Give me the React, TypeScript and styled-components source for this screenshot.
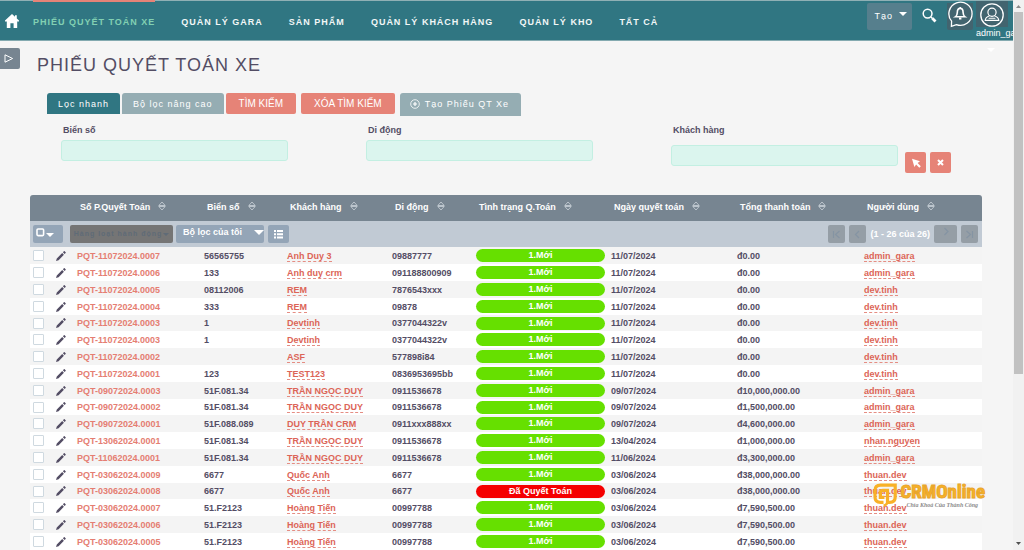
import React from 'react';
import styled, { createGlobalStyle, css } from 'styled-components';

const color = {
  teal: '#307682',
  page: '#f5f5f5',
  slate: '#778591',
  mist: '#c1cad4',
  steel: '#94a5b7',
  tab: '#95adb3',
  coral: '#e68377',
  ink: '#534d64',
  green: '#66e000',
  red: '#f50000',
};

const GlobalStyle = createGlobalStyle`
  * { box-sizing: border-box; }
  body {
    margin: 0;
    background: ${color.page};
    color: ${color.ink};
    font: 9px/12px "Liberation Sans", Arial, sans-serif;
  }
  button, input { font: inherit; margin: 0; }
  button { border: 0; padding: 0; color: #fff; cursor: pointer; }
  a { color: inherit; text-decoration: none; }
`;

const Shell = styled.div`
  display: flex;
  height: 100vh;
  overflow: hidden;
`;

const Page = styled.div`
  position: relative;
  flex: 1;
  min-width: 0;
  overflow: hidden;
`;

const ScrollTrack = styled.div`
  display: flex;
  flex-direction: column;
  justify-content: space-between;
  align-items: center;
  width: 11px;
  padding: 5px 0;
  background: #f1f1f1;
`;

const ScrollThumb = styled.div`
  flex: none;
  width: 9px;
  height: 67%;
  margin-top: 4px;
  margin-bottom: auto;
  background: #c1c1c1;
`;

const NavBar = styled.nav`
  display: flex;
  height: 41px;
  padding-left: 5px;
  background: ${color.teal};
  border-top: 1px solid #8fb0b5;
  border-bottom: 1px solid #84aab0;
`;

const HomeLink = styled.a`
  display: flex;
  align-items: center;
  width: 28px;
`;

const NavList = styled.div`
  display: flex;
  gap: 26px;
  flex: 1;
`;

const NavItem = styled.a<{ $active?: boolean }>`
  position: relative;
  padding-top: 15px;
  font-weight: bold;
  letter-spacing: 1px;
  white-space: nowrap;
  color: ${(p) => (p.$active ? '#82d0b2' : '#f2f7f7')};
  ${(p) =>
    p.$active &&
    css`
      &::before {
        content: '';
        position: absolute;
        inset: -1px 0 auto;
        height: 2px;
        background: ${color.coral};
      }
    `}
`;

const NavTools = styled.div`
  display: flex;
  align-items: flex-start;
`;

const CreateButton = styled.button`
  display: flex;
  align-items: center;
  gap: 6px;
  height: 27px;
  margin-top: 2px;
  padding: 0 5px 2px 7px;
  border-radius: 2px;
  background: #567f8d;
  letter-spacing: 1px;
  svg { margin-bottom: 3px; }
`;

const SearchButton = styled.button`
  margin: 7px 10px 0;
  width: 15px;
  height: 15px;
  background: none;
`;

const BellButton = styled.button`
  width: 26px;
  height: 29px;
  border-radius: 2px;
  background: linear-gradient(transparent 2px, #42646f 2px);
`;

const UserButton = styled.button`
  display: flex;
  flex-direction: column;
  align-items: flex-start;
  width: 37px;
  margin-left: 3px;
  overflow: hidden;
  background: none;
`;

const Avatar = styled.span`
  display: flex;
  justify-content: center;
  align-items: flex-end;
  width: 32px;
  height: 26px;
  background: #42646f;
`;

const UserCaret = styled.span`
  position: absolute;
  top: 48px;
  right: 18px;
  line-height: 0;
  color: #fff;
`;

const TitleRow = styled.header`
  display: flex;
  gap: 17px;
  padding-top: 7px;
`;

const SideToggle = styled.button`
  display: flex;
  align-items: center;
  padding-left: 4px;
  width: 20px;
  height: 21px;
  border-radius: 0 2px 2px 0;
  background: ${color.slate};
`;

const Title = styled.h1`
  margin: 5px 0 0;
  font-size: 18px;
  line-height: 24px;
  font-weight: normal;
  letter-spacing: 1px;
`;

const ActionRow = styled.div`
  display: flex;
  align-items: flex-start;
  padding: 16px 0 0 47px;
`;

const TabButton = styled.button<{ $active?: boolean }>`
  height: 21px;
  margin-right: 2px;
  padding: 0 11px;
  border-radius: 3px 3px 0 0;
  background: ${(p) => (p.$active ? color.teal : color.tab)};
  letter-spacing: 1px;
`;

const CoralButton = styled.button`
  height: 21px;
  margin-right: 5px;
  padding: 0 13px;
  border-radius: 2px;
  background: ${color.coral};
  font-size: 10px;
`;

const NewButton = styled.button`
  display: flex;
  align-items: center;
  gap: 5px;
  height: 23px;
  padding: 0 12px 2px 10px;
  border-radius: 3px 3px 0 0;
  background: ${color.tab};
  letter-spacing: 1px;
`;

const Filters = styled.form`
  display: grid;
  grid-template-columns: repeat(3, 1fr);
  align-items: start;
  height: 79px;
  padding: 8px 37px 0 61px;
`;

const Field = styled.div`
  display: grid;
  gap: 4px;
`;

const FieldLabel = styled.label`
  padding-left: 2px;
  font-weight: bold;
`;

const FieldRow = styled.div<{ $lowered?: boolean }>`
  display: flex;
  gap: 4px;
  padding-top: ${(p) => (p.$lowered ? '5px' : '0')};
`;

const TextBox = styled.input`
  width: 227px;
  height: 21px;
  border: 1px solid #c3efe2;
  border-radius: 3px;
  background: #dbf5ee;
`;

const PickerButtons = styled.div`
  display: flex;
  gap: 4px;
  padding: 7px 0 0 3px;
`;

const SquareButton = styled.button`
  display: flex;
  align-items: center;
  justify-content: center;
  width: 21px;
  height: 21px;
  border-radius: 2px;
  background: ${color.coral};
`;

const TableWrap = styled.div`
  margin: 0 31px 0 30px;
  border-radius: 3px 3px 0 0;
  overflow: hidden;
`;

const Table = styled.table`
  width: 100%;
  table-layout: fixed;
  border-collapse: collapse;
  font-weight: bold;
`;

const HeadRow = styled.tr`
  height: 26px;
  background: ${color.slate};
  color: #fff;
`;

const HeadCell = styled.th`
  padding: 0 0 2px 6px;
  text-align: left;
  white-space: nowrap;
  svg { margin-left: 8px; vertical-align: -1px; }
`;

const ToolRow = styled.tr`
  height: 26px;
  background: ${color.mist};
  color: #fff;
  td { padding: 0 4px 0 3px; }
`;

const ToolBar = styled.div`
  display: flex;
  align-items: center;
`;

const ToolButton = styled.button<{ $width: number; $gap: number }>`
  display: flex;
  align-items: center;
  justify-content: center;
  gap: 1px;
  width: ${(p) => p.$width}px;
  height: 18px;
  margin-right: ${(p) => p.$gap}px;
  border-radius: 2px;
  background: ${color.steel};
  font-weight: bold;
  white-space: nowrap;
`;

const SelectButton = styled(ToolButton)`
  justify-content: flex-start;
  padding: 0 0 3px 3px;
  svg + svg { margin-top: 5px; }
`;

const FilterButton = styled(ToolButton)`
  justify-content: space-between;
  padding: 0 0 4px 7px;
`;

const BulkButton = styled(ToolButton)`
  background: #757575;
  color: #5f6b77;
  font-size: 7px;
  letter-spacing: 1px;
`;

const Pager = styled.div`
  display: flex;
  align-items: center;
  gap: 4px;
  margin-left: auto;
`;

const PageButton = styled.button<{ $wide?: boolean }>`
  display: flex;
  align-items: center;
  justify-content: center;
  width: ${(p) => (p.$wide ? 23 : 17)}px;
  height: 18px;
  padding-bottom: ${(p) => (p.$wide ? 6 : 0)}px;
  border-radius: 2px;
  background: #959ea6;
`;

const DataRow = styled.tr`
  height: 17px;
  background: #fff;
  &:nth-child(odd) { background: #f4f4f4; }
  &:nth-child(5n) { height: 16px; }
`;

const Cell = styled.td`
  padding: 0 3px;
  line-height: 14px;
  white-space: nowrap;
`;

const CheckCell = styled(Cell)`
  line-height: 0;
`;

const CheckBox = styled.input`
  display: block;
  appearance: none;
  width: 11px;
  height: 11px;
  border: 1px solid #cfd9e0;
  border-radius: 1px;
  background: #fff;
`;

const EditCell = styled(Cell)`
  padding-left: 9px;
  line-height: 0;
`;

const NumberLink = styled.a`
  color: #e57e72;
`;

const DashedLink = styled.a`
  display: inline-block;
  line-height: 10px;
  border-bottom: 1px dashed #e58d83;
  color: #dc6457;
`;

const Pill = styled.span<{ $done: boolean }>`
  display: block;
  height: 13px;
  border-radius: 7px;
  background: ${(p) => (p.$done ? color.red : color.green)};
  color: #fff;
  line-height: 13px;
  text-align: center;
`;

const Watermark = styled.div`
  position: absolute;
  right: 28px;
  bottom: 41px;
  display: flex;
  gap: 3px;
  align-items: flex-start;
`;

const BrandName = styled.div`
  color: #f8b128;
  font: bold 19px/18px "Liberation Sans Narrow", "Roboto Condensed", "Open Sans Condensed", "DejaVu Sans Condensed", sans-serif;
  -webkit-text-stroke: 1px #e9a62b;
`;

const Tagline = styled.div`
  padding-left: 6px;
  color: #8b8b8b;
  font: italic bold 6px/8px "Liberation Serif", serif;
`;

const Caret = ({ size = 8 }: { size?: number }) => (
  <svg width={size} height={size / 2} viewBox="0 0 8 4" aria-hidden="true">
    <path d="M0 0h8L4 4z" fill="currentColor" />
  </svg>
);

const SortIcon = () => (
  <svg width="8" height="10" viewBox="0 0 8 10" fill="none" stroke="#cdd4da" aria-hidden="true">
    <path d="M.8 4.5 4 1l3.2 3.5zM.8 5.5 4 9l3.2-3.5z" strokeWidth="0.8" />
  </svg>
);

const Pencil = () => (
  <svg width="10" height="10" viewBox="0 0 10 10" fill={color.ink} aria-hidden="true">
    <path d="M0 10l.8-2.6L6.2 2l1.7 1.7L2.6 9.2zM6.9 1.3L7.9.3q.4-.4.8 0l.9.9q.4.5 0 .9L8.6 3z" />
  </svg>
);

const Chevron = ({ d }: { d: string }) => (
  <svg width="9" height="9" viewBox="0 0 9 9" fill="none" stroke="#8594a3" strokeWidth="1.2" aria-hidden="true">
    <path d={d} />
  </svg>
);

const navItems = ['PHIẾU QUYẾT TOÁN XE', 'QUẢN LÝ GARA', 'SẢN PHẨM', 'QUẢN LÝ KHÁCH HÀNG', 'QUẢN LÝ KHO', 'TẤT CẢ'];

const columns = [
  ['Số P.Quyết Toán', 127],
  ['Biển số', 83],
  ['Khách hàng', 105],
  ['Di động', 84],
  ['Tình trạng Q.Toán', 135],
  ['Ngày quyết toán', 126],
  ['Tổng thanh toán', 127],
  ['Người dùng', 121],
] as const;

const rows = [
  ['PQT-11072024.0007', '56565755', 'Anh Duy 3', '09887777', '1.Mới', '11/07/2024', 'đ0.00', 'admin_gara'],
  ['PQT-11072024.0006', '133', 'Anh duy crm', '091188800909', '1.Mới', '11/07/2024', 'đ0.00', 'admin_gara'],
  ['PQT-11072024.0005', '08112006', 'REM', '7876543xxx', '1.Mới', '11/07/2024', 'đ0.00', 'dev.tinh'],
  ['PQT-11072024.0004', '333', 'REM', '09878', '1.Mới', '11/07/2024', 'đ0.00', 'dev.tinh'],
  ['PQT-11072024.0003', '1', 'Devtinh', '0377044322v', '1.Mới', '11/07/2024', 'đ0.00', 'dev.tinh'],
  ['PQT-11072024.0003', '1', 'Devtinh', '0377044322v', '1.Mới', '11/07/2024', 'đ0.00', 'dev.tinh'],
  ['PQT-11072024.0002', '', 'ASF', '577898i84', '1.Mới', '11/07/2024', 'đ0.00', 'dev.tinh'],
  ['PQT-11072024.0001', '123', 'TEST123', '0836953695bb', '1.Mới', '11/07/2024', 'đ0.00', 'dev.tinh'],
  ['PQT-09072024.0003', '51F.081.34', 'TRẦN NGỌC DUY', '0911536678', '1.Mới', '09/07/2024', 'đ10,000,000.00', 'admin_gara'],
  ['PQT-09072024.0002', '51F.081.34', 'TRẦN NGỌC DUY', '0911536678', '1.Mới', '09/07/2024', 'đ1,500,000.00', 'admin_gara'],
  ['PQT-09072024.0001', '51F.088.089', 'DUY TRẦN CRM', '0911xxx888xx', '1.Mới', '09/07/2024', 'đ4,600,000.00', 'admin_gara'],
  ['PQT-13062024.0001', '51F.081.34', 'TRẦN NGỌC DUY', '0911536678', '1.Mới', '13/04/2024', 'đ1,000,000.00', 'nhan.nguyen'],
  ['PQT-11062024.0001', '51F.081.34', 'TRẦN NGỌC DUY', '0911536678', '1.Mới', '11/06/2024', 'đ3,300,000.00', 'admin_gara'],
  ['PQT-03062024.0009', '6677', 'Quốc Anh', '6677', '1.Mới', '03/06/2024', 'đ38,000,000.00', 'thuan.dev'],
  ['PQT-03062024.0008', '6677', 'Quốc Anh', '6677', 'Đã Quyết Toán', '03/06/2024', 'đ38,000,000.00', 'thuan.dev'],
  ['PQT-03062024.0007', '51.F2123', 'Hoàng Tiến', '00997788', '1.Mới', '03/06/2024', 'đ7,590,500.00', 'thuan.dev'],
  ['PQT-03062024.0006', '51.F2123', 'Hoàng Tiến', '00997788', '1.Mới', '03/06/2024', 'đ7,590,500.00', 'thuan.dev'],
  ['PQT-03062024.0005', '51.F2123', 'Hoàng Tiến', '00997788', '1.Mới', '03/06/2024', 'đ7,590,500.00', 'thuan.dev'],
];

function TopNav() {
  return (
    <NavBar>
      <HomeLink href="#" aria-label="Home">
        <svg width="14" height="14" viewBox="0 0 14 14" fill="#fff" aria-hidden="true">
          <path d="M7 0l3 2.8V1.2h1.8v3.3L14 6.6v1h-1.8V14H8.6V9.2H5.4V14H1.8V7.6H0v-1z" />
        </svg>
      </HomeLink>
      <NavList>
        {navItems.map((label, i) => (
          <NavItem href="#" key={label} $active={i === 0}>
            {label}
          </NavItem>
        ))}
      </NavList>
      <NavTools>
        <CreateButton>
          Tạo <Caret size={8} />
        </CreateButton>
        <SearchButton aria-label="Search">
          <svg width="15" height="15" viewBox="0 0 15 15" fill="none" stroke="#fff" aria-hidden="true">
            <circle cx="5.6" cy="5.6" r="4.4" strokeWidth="1.5" />
            <path d="M9 9l1.5 1.5" strokeWidth="1.5" />
            <path d="M10.3 10.3l3.2 3.2" strokeWidth="2.8" />
          </svg>
        </SearchButton>
        <BellButton aria-label="Notifications">
          <svg width="26" height="27" viewBox="0 0 26 27" fill="none" stroke="#fff" strokeWidth="1.3" aria-hidden="true">
            <path d="M4.6 20.2A11.6 11.6 0 1 1 9.4 23.6L4.4 25.4z" />
            <path d="M8.4 15.8h9.6c-1.4-1-1.9-2-1.9-4.2 0-2.8-1-4.2-2.9-4.2s-2.9 1.4-2.9 4.2c0 2.2-.5 3.2-1.9 4.2zM13.2 7.4V6M12 17.6h2.4" strokeWidth="1.6" />
          </svg>
        </BellButton>
        <UserButton>
          <Avatar>
            <svg width="24" height="24" viewBox="0 0 24 24" fill="none" stroke="#fff" aria-hidden="true">
              <circle cx="12" cy="12" r="11.2" strokeWidth="1.3" />
              <circle cx="12" cy="9.3" r="4.1" strokeWidth="1.2" />
              <path d="M9.6 12.8C7 13.7 5.4 14.8 5.2 17.4h13.6c-.2-2.6-1.8-3.7-4.4-4.6M8.6 15.2h6.8" strokeWidth="1.1" />
            </svg>
          </Avatar>
          admin_gara
        </UserButton>
      </NavTools>
      <UserCaret>
        <Caret />
      </UserCaret>
    </NavBar>
  );
}

function FilterForm() {
  return (
    <Filters>
      <Field>
        <FieldLabel htmlFor="plate">Biển số</FieldLabel>
        <TextBox id="plate" />
      </Field>
      <Field>
        <FieldLabel htmlFor="mobile">Di động</FieldLabel>
        <TextBox id="mobile" />
      </Field>
      <Field>
        <FieldLabel htmlFor="customer">Khách hàng</FieldLabel>
        <FieldRow $lowered>
          <TextBox id="customer" />
          <PickerButtons>
            <SquareButton type="button" aria-label="Select">
              <svg width="10" height="10" viewBox="0 0 10 10" fill="#fff" aria-hidden="true">
                <path d="M1 .8l8 2.4-2.4 1.8 3.2 3.2-1.5 1.5-3.2-3.2L3.4 9z" />
              </svg>
            </SquareButton>
            <SquareButton type="button" aria-label="Clear">
              <svg width="7" height="7" viewBox="0 0 7 7" stroke="#fff" strokeWidth="2" aria-hidden="true">
                <path d="M1 1l5 5M6 1L1 6" />
              </svg>
            </SquareButton>
          </PickerButtons>
        </FieldRow>
      </Field>
    </Filters>
  );
}

function TableTools() {
  return (
    <ToolBar>
      <SelectButton $width={30} $gap={7} aria-label="Select rows">
        <svg width="9" height="9" viewBox="0 0 9 9" fill="none" stroke="#fff" strokeWidth="1.6" aria-hidden="true">
          <rect x="1" y="1" width="6.6" height="6.6" rx="1" />
        </svg>
        <Caret />
      </SelectButton>
      <BulkButton $width={103} $gap={3} disabled>
        Hàng loạt hành động <Caret size={6} />
      </BulkButton>
      <FilterButton $width={88} $gap={4}>
        Bộ lọc của tôi <Caret size={10} />
      </FilterButton>
      <ToolButton $width={21} $gap={0} aria-label="Choose columns">
        <svg width="9" height="9" viewBox="0 0 9 9" fill="#fff" aria-hidden="true">
          <path d="M0 0h2v2H0zM3 0h6v2H3zM0 3.3h2v2H0zM3 3.3h6v2H3zM0 6.6h2v2H0zM3 6.6h6v2H3z" />
        </svg>
      </ToolButton>
      <Pager>
        <PageButton aria-label="First page"><Chevron d="M1.5 1v7M7.5 1L3.5 4.5l4 3.5" /></PageButton>
        <PageButton aria-label="Previous page"><Chevron d="M6 1L2.5 4.5 6 8" /></PageButton>
        <span>(1 - 26 của 26)</span>
        <PageButton $wide aria-label="Next page"><Chevron d="M3.5 1L7 4.5 3.5 8" /></PageButton>
        <PageButton aria-label="Last page"><Chevron d="M7.5 1v7M1.5 1l4 3.5-4 3.5" /></PageButton>
      </Pager>
    </ToolBar>
  );
}

function RecordTable() {
  return (
    <TableWrap>
      <Table>
        <colgroup>
          <col style={{ width: 17 }} />
          <col style={{ width: 27 }} />
          {columns.map(([label, width]) => (
            <col key={label} style={{ width }} />
          ))}
        </colgroup>
        <thead>
          <HeadRow>
            <td colSpan={2} />
            {columns.map(([label]) => (
              <HeadCell key={label} scope="col">
                {label}
                <SortIcon />
              </HeadCell>
            ))}
          </HeadRow>
          <ToolRow>
            <td colSpan={10}>
              <TableTools />
            </td>
          </ToolRow>
        </thead>
        <tbody>
          {rows.map(([no, plate, customer, mobile, status, date, total, user], i) => (
            <DataRow key={i}>
              <CheckCell>
                <CheckBox type="checkbox" aria-label={no} />
              </CheckCell>
              <EditCell>
                <a href="#" aria-label="Edit">
                  <Pencil />
                </a>
              </EditCell>
              <Cell><NumberLink href="#">{no}</NumberLink></Cell>
              <Cell>{plate}</Cell>
              <Cell><DashedLink href="#">{customer}</DashedLink></Cell>
              <Cell>{mobile}</Cell>
              <Cell><Pill $done={status !== '1.Mới'}>{status}</Pill></Cell>
              <Cell>{date}</Cell>
              <Cell>{total}</Cell>
              <Cell><DashedLink href="#">{user}</DashedLink></Cell>
            </DataRow>
          ))}
        </tbody>
      </Table>
    </TableWrap>
  );
}

export default function App() {
  return (
    <>
      <GlobalStyle />
      <Shell>
        <Page>
          <TopNav />
          <TitleRow>
            <SideToggle aria-label="Open sidebar">
              <svg width="10" height="9" viewBox="0 0 10 9" fill="none" stroke="#fff" aria-hidden="true">
                <path d="M1 .8v7.4l7.6-3.7z" />
              </svg>
            </SideToggle>
            <Title>PHIẾU QUYẾT TOÁN XE</Title>
          </TitleRow>
          <ActionRow>
            <TabButton $active>Lọc nhanh</TabButton>
            <TabButton>Bộ lọc nâng cao</TabButton>
            <CoralButton>TÌM KIẾM</CoralButton>
            <CoralButton>XÓA TÌM KIẾM</CoralButton>
            <NewButton>
              <svg width="10" height="10" viewBox="0 0 10 10" fill="none" stroke="#fff" aria-hidden="true">
                <circle cx="5" cy="5" r="4.3" strokeWidth="0.8" />
                <path d="M5 3v4M3 5h4" strokeWidth="1.2" />
              </svg>
              Tạo Phiếu QT Xe
            </NewButton>
          </ActionRow>
          <FilterForm />
          <RecordTable />
          <Watermark>
            <svg width="24" height="24" viewBox="0 0 24 24" fill="none" stroke="#f8b128" strokeWidth="3.2" aria-hidden="true">
              <path d="M10.5 19.4H7.5Q2 19.4 2 14V7.5Q2 2.2 7.5 2.2h14.7V14q0 5.4-5.5 5.4h-2.2V7.4H10Q7.4 7.4 7.4 10v4.4h4" />
              <path d="M14.6 18q0 3.6-4 4.6" strokeWidth="2.4" />
            </svg>
            <div>
              <BrandName>CRMOnline</BrandName>
              <Tagline>Chìa Khoá Của Thành Công</Tagline>
            </div>
          </Watermark>
        </Page>
        <ScrollTrack>
          <svg width="5" height="3" viewBox="0 0 5 3" aria-hidden="true">
            <path d="M0 3h5L2.5 0z" fill="#8a8a8a" />
          </svg>
          <ScrollThumb />
          <svg width="5" height="3" viewBox="0 0 5 3" aria-hidden="true">
            <path d="M0 0h5L2.5 3z" fill="#505050" />
          </svg>
        </ScrollTrack>
      </Shell>
    </>
  );
}
